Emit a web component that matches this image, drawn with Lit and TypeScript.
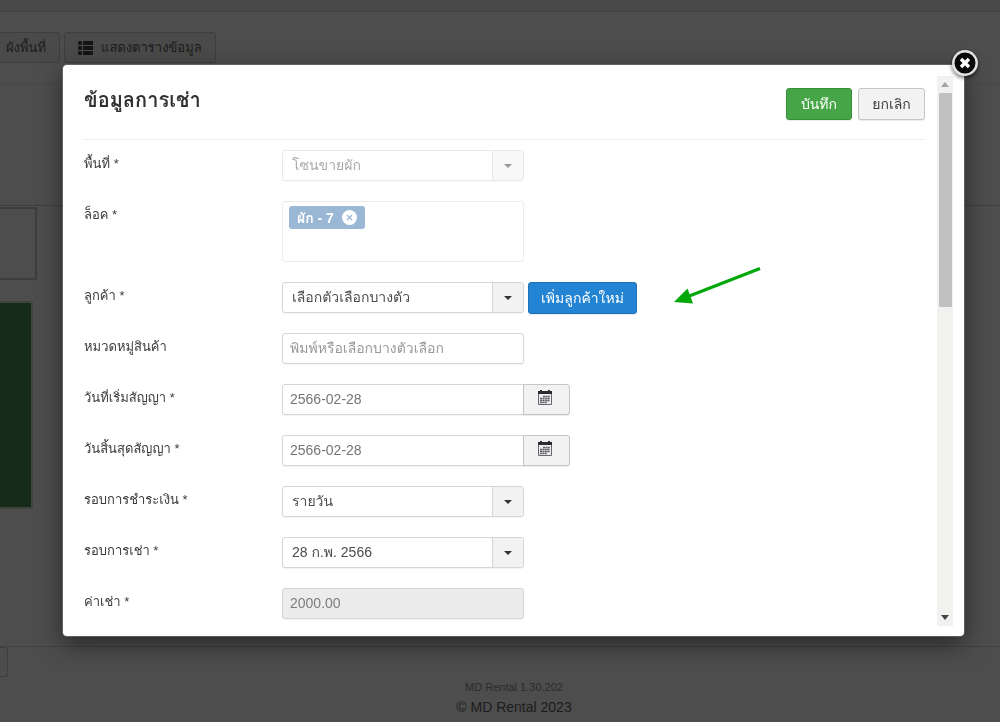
import { LitElement, html, css, svg, nothing } from "lit";
import { customElement, property } from "lit/decorators.js";

const controlStyles = css`
  * { box-sizing: border-box; }
  input, select, button {
    font-family: inherit;
    margin: 0;
  }
  .control {
    width: 242px;
    height: 31px;
    border: 1px solid #d5d5d5;
    border-radius: 3px;
    background: #fff;
    color: #757575;
    font-size: 14px;
    padding: 0 7px 1px;
    outline: 0;
    box-shadow: 0 1px 1px rgba(0, 0, 0, 0.05);
  }
  .control::placeholder { color: #999; opacity: 1; }
  .control:disabled { background: #ececec; color: #7c7c7c; }
`;

@customElement("select-field")
export class SelectField extends LitElement {
  @property() label = "";
  @property() value = "";
  @property({ type: Boolean }) disabled = false;

  static styles = [
    controlStyles,
    css`
      :host { display: block; }
      .wrap { display: grid; width: 242px; }
      .wrap > * { grid-area: 1 / 1; }
      .select {
        appearance: none;
        color: #4c4c4c;
        padding: 0 40px 2px 9px;
      }
      .select:disabled { background: #fff; color: #555; opacity: 1; }
      .arrow {
        justify-self: end;
        display: grid;
        place-items: center;
        width: 31px;
        margin: 1px;
        border-left: 1px solid #d5d5d5;
        background: #f2f2f2;
        border-radius: 0 2px 2px 0;
        pointer-events: none;
      }
      .off { opacity: 0.5; }
    `,
  ];

  render() {
    return html`<div class="wrap ${this.disabled ? "off" : ""}">
      <select class="control select" aria-label=${this.label} ?disabled=${this.disabled}>
        <option>${this.value}</option>
      </select>
      <span class="arrow">
        <svg width="8" height="4" viewBox="0 0 8 4"><path d="M0 0h8L4 4z" fill="#333" /></svg>
      </span>
    </div>`;
  }
}

const calendarIcon = html`<svg class="calendar" width="14" height="16" viewBox="0 0 14 16">
  ${svg`
    <path d="M0 1h2V0h2v1h6V0h2v1h2v3H0z" fill="#2b2b33" />
    <path d="M.5 4v10.500h13V4" fill="#eee" stroke="#666670" />
    <path d="M5 6.500h7M2 8.500h10M2 10.500h10M2 12.500h7" stroke="#66606a" stroke-width="1.300" stroke-dasharray="2 .4" />
  `}
</svg>`;

@customElement("app-root")
export class AppRoot extends LitElement {
  static styles = [
    controlStyles,
    css`
      :host {
        display: block;
        min-height: 100vh;
        background: #4d4d4d;
        color: #3c3c3c;
        font-family: "Liberation Sans", Tahoma, Loma, Waree, Garuda, "Noto Sans Thai Looped", sans-serif;
        font-size: 13px;
        line-height: 20px;
      }
      .page {
        min-height: 100vh;
        display: flex;
        flex-direction: column;
        overflow: hidden;
      }
      .topbar { height: 12px; background: #494949; border-bottom: 1px solid #434343; }
      .tools {
        display: flex;
        gap: 4px;
        padding: 20px 0;
        height: 72px;
        border-bottom: 1px solid #484848;
      }
      .tool {
        display: flex;
        align-items: center;
        gap: 8px;
        height: 31px;
        padding: 0 13px;
        border: 1px solid #3e3e3e;
        border-radius: 3px;
        background: #4a4a4a;
        color: #1c1c1c;
        font-size: 13px;
        white-space: nowrap;
      }
      .tool-cut { width: 60px; justify-content: flex-end; border-left: 0; border-radius: 0 3px 3px 0; }
      .filters { height: 122px; border-bottom: 1px solid #404040; }
      .map { height: 441px; border-bottom: 1px solid #424242; padding-top: 1px; }
      .zone { width: 37px; height: 73px; border: 2px solid #3e3e3e; border-left: 0; }
      .lot {
        width: 33px;
        height: 208px;
        margin-top: 21px;
        background: #162c18;
        border: 2px solid #3f443f;
        border-left: 0;
      }
      .pager { width: 8px; height: 30px; border: 1px solid #3e3e3e; border-left: 0; border-radius: 0 4px 4px 0; }
      .footer { flex: 1; text-align: center; color: #1c1c1c; font-size: 14px; line-height: 20px; margin-right: -28px; }
      .version { font-size: 11px; color: #2b2b2b; line-height: 20px; }

      .overlay {
        position: fixed;
        inset: 0;
        padding: 65px 36px 86px 63px;
        display: grid;
      }
      .modal {
        position: relative;
        display: flex;
        gap: 12px;
        padding: 11px 11px 10px 21px;
        background: #fff;
        border-radius: 4px;
        box-shadow: 0 0 0 1px rgba(130, 130, 130, 0.5), 0 8px 25px rgba(0, 0, 0, 0.5);
        min-height: 0;
      }
      .body { flex: 1; overflow: hidden; }
      .head {
        display: flex;
        gap: 6px;
        height: 64px;
        padding-top: 12px;
        border-bottom: 1px solid #eee;
      }
      .title { flex: 1; margin: 0; font-size: 20px; line-height: 24px; color: #333; }
      .btn {
        height: 32px;
        border: 1px solid #c5c5c5;
        border-radius: 3px;
        background: #f2f2f2;
        color: #3c3c3c;
        font-size: 14px;
        padding: 0;
        white-space: nowrap;
        box-shadow: 0 1px 1px rgba(0, 0, 0, 0.08);
      }
      .save { width: 66px; background: #46a546; border-color: #3b8f3b; color: #fff; }
      .cancel { width: 67px; }
      .add { width: 109px; background: #2384d3; border-color: #1c72b8; color: #fff; }
      .form { display: grid; gap: 20px; padding-top: 10px; }
      .row { display: grid; grid-template-columns: 198px 1fr; }
      .row > label { padding-top: 4px; height: 31px; }
      .line { display: flex; gap: 4px; height: 31px; }
      .date { display: flex; }
      .date .control { border-radius: 3px 0 0 3px; }
      .pick { width: 47px; height: 31px; border-radius: 0 3px 3px 0; margin-left: -1px; }
      .calendar { margin-right: 4px; }
      .tags {
        display: flex;
        align-items: flex-start;
        width: 242px;
        height: 61px;
        padding: 4px 6px;
        border: 1px solid #ebebeb;
        border-radius: 3px;
      }
      .tag {
        display: flex;
        align-items: center;
        gap: 8px;
        height: 23px;
        padding: 0 8px;
        border-radius: 3px;
        background: #9ab8d5;
        color: #fff;
        font-size: 14px;
        font-weight: 700;
      }
      .remove { display: flex; padding: 0; border: 0; background: none; }
      .scroll {
        display: flex;
        flex-direction: column;
        align-items: center;
        width: 16px;
        padding: 6px 0;
        background: #f1f1f0;
      }
      .thumb { width: 13px; height: 214px; margin: 6px 0 auto; background: #c1c1c1; }
      .close {
        position: absolute;
        top: -15px;
        right: -14px;
        padding: 0;
        border: 0;
        background: none;
        display: flex;
        border-radius: 50%;
        box-shadow: 0 2px 4px rgba(0, 0, 0, 0.6);
      }
      .pointer { position: absolute; left: 610px; top: 201px; }
    `,
  ];

  private row(id: string, label: string, control: unknown) {
    return html`<div class="row"><label for=${id}>${label}</label>${control}</div>`;
  }

  private select(id: string, label: string, value: string, disabled = false, extra: unknown = nothing) {
    return this.row(
      id,
      label,
      html`<div class="line">
        <select-field id=${id} .label=${label} .value=${value} .disabled=${disabled}></select-field>${extra}
      </div>`
    );
  }

  private date(id: string, label: string) {
    return this.row(
      id,
      label,
      html`<div class="date">
        <input class="control" id=${id} type="text" .value=${"2566-02-28"} />
        <button type="button" class="btn pick" aria-label=${label}>${calendarIcon}</button>
      </div>`
    );
  }

  render() {
    return html`
      <div class="page">
        <div class="topbar"></div>
        <div class="tools">
          <button class="tool tool-cut">ผังพื้นที่</button>
          <button class="tool">
            <svg width="15" height="14" viewBox="0 0 15 14" fill="#151515">
              <path d="M5 0h10v4H5zM5 5h10v4H5zM5 10h10v4H5z" />
              <rect width="4" height="4" rx="1.500" />
              <rect y="5" width="4" height="4" rx="1.500" />
              <rect y="10" width="4" height="4" rx="1.500" />
            </svg>
            แสดงตารางข้อมูล
          </button>
        </div>
        <div class="filters"></div>
        <div class="map">
          <div class="zone"></div>
          <div class="lot"></div>
        </div>
        <div class="pager"></div>
        <footer class="footer">
          <div class="version">MD Rental 1.30.202</div>
          <div>© MD Rental 2023</div>
        </footer>
      </div>
      <div class="overlay">
        <section class="modal" role="dialog" aria-labelledby="title">
          <div class="body">
            <header class="head">
              <h2 class="title" id="title">ข้อมูลการเช่า</h2>
              <button class="btn save">บันทึก</button>
              <button class="btn cancel">ยกเลิก</button>
            </header>
            <form class="form">
              ${this.select("area", "พื้นที่ *", "โซนขายผัก", true)}
              ${this.row(
                "lot",
                "ล็อค *",
                html`<div class="tags">
                  <span class="tag">ผัก - 7
                    <button type="button" class="remove" id="lot" aria-label="ผัก - 7">
                      <svg width="15" height="15" viewBox="0 0 15 15">
                        <circle cx="7.5" cy="7.5" r="7.5" fill="#fff" />
                        <path d="M5 5l5 5M10 5l-5 5" stroke="#9ab8d5" stroke-width="1.2" />
                      </svg>
                    </button>
                  </span>
                </div>`
              )}
              ${this.select("customer", "ลูกค้า *", "เลือกตัวเลือกบางตัว", false,
                html`<button type="button" class="btn add">เพิ่มลูกค้าใหม่</button>`)}
              ${this.row("category", "หมวดหมู่สินค้า",
                html`<input class="control" id="category" type="text" placeholder="พิมพ์หรือเลือกบางตัวเลือก" />`)}
              ${this.date("start", "วันที่เริ่มสัญญา *")}
              ${this.date("end", "วันสิ้นสุดสัญญา *")}
              ${this.select("payment", "รอบการชำระเงิน *", "รายวัน")}
              ${this.select("period", "รอบการเช่า *", "28 ก.พ. 2566")}
              ${this.row("rent", "ค่าเช่า *",
                html`<input class="control" id="rent" type="text" .value=${"2000.00"} disabled />`)}
            </form>
          </div>
          <div class="scroll" aria-hidden="true">
            <svg width="8" height="5" viewBox="0 0 8 5"><path d="M0 5h8L4 0z" fill="#a3a3a3" /></svg>
            <div class="thumb"></div>
            <svg width="8" height="5" viewBox="0 0 8 5"><path d="M0 0h8L4 5z" fill="#444" /></svg>
          </div>
          <svg class="pointer" width="90" height="42" viewBox="0 0 90 42">
            <path d="M87 2.500L15 30.500" stroke="#00a80a" stroke-width="3" />
            <path d="M1 36L14.500 22.500L20 37.500z" fill="#00a80a" />
          </svg>
          <button class="close" aria-label="ปิด">
            <svg width="26" height="26" viewBox="0 0 26 26">
              <circle cx="13" cy="13" r="11.700" fill="#080808" stroke="#e2e2e2" stroke-width="2.400" />
              <path d="M9 9l8 8M17 9l-8 8" stroke="#fff" stroke-width="3.400" />
            </svg>
          </button>
        </section>
      </div>
    `;
  }
}
